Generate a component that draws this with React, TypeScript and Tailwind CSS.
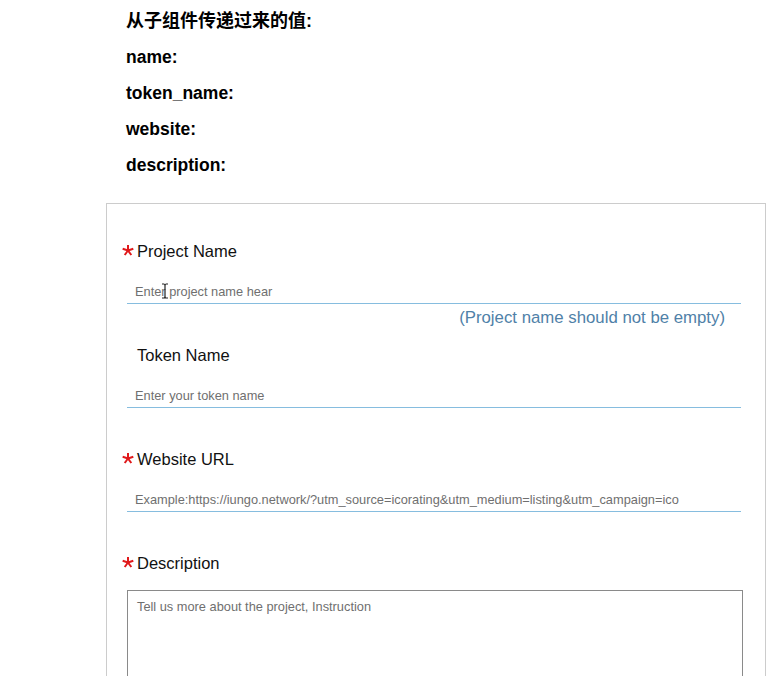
import React from 'react';

const FONT = '"Liberation Sans", Arial, "Noto Sans CJK SC", sans-serif';

function Star() {
  // five-spoked red asterisk used on required labels
  const spokes = [-90, -18, 54, 126, 198];
  return (
    <svg width="12" height="12" viewBox="0 0 12 12" className="mt-[-3px]">
      {spokes.map((a) => {
        const r = (a * Math.PI) / 180;
        return (
          <line
            key={a}
            x1="6"
            y1="6.5"
            x2={6 + Math.cos(r) * 5.6}
            y2={6.5 + Math.sin(r) * 5.6}
            stroke="#e0191b"
            strokeWidth="2"
          />
        );
      })}
    </svg>
  );
}

function Field({
  label,
  required,
  placeholder,
  error,
  cursor,
}: {
  label: string;
  required?: boolean;
  placeholder: string;
  error?: string;
  cursor?: boolean;
}) {
  return (
    <div className="flex flex-col">
      <div className="h-[24px] flex items-center">
        <div className="w-[15px] flex items-center">{required && <Star />}</div>
        <span className="text-[16.5px] text-[#111]">{label}</span>
      </div>
      <div className="relative mt-[16px] ml-[5px] w-[614px] h-[25px]">
        <input
          className="block w-full h-[25px] px-[8px] border-b border-[#86bddf] outline-none text-[12.8px] placeholder:text-[#6f6f6f] bg-transparent"
          placeholder={placeholder}
        />
        {cursor && (
          <svg width="8" height="16" viewBox="0 0 8 16" className="absolute left-[34px] top-[4px]">
            <path d="M1 1 H3 Q4 1 4 3 V13 Q4 15 3 15 H1 M7 1 H5 Q4 1 4 3 M4 13 Q4 15 5 15 H7" fill="none" stroke="#222" strokeWidth="1.2" />
          </svg>
        )}
      </div>
      <div className="h-[20px] mt-[4px] mr-[40px] flex items-center justify-end text-[16.8px] text-[#4f81a8]">
        {error}
      </div>
    </div>
  );
}

export default function App() {
  return (
    <div className="bg-white min-h-screen" style={{ fontFamily: FONT }}>
      <div className="pl-[126px] pt-[3px] text-[17.5px] font-bold text-black">
        <div className="h-[36px] flex items-center text-[18px]">从子组件传递过来的值:</div>
        <div className="h-[36px] flex items-center">name:</div>
        <div className="h-[36px] flex items-center">token_name:</div>
        <div className="h-[36px] flex items-center">website:</div>
        <div className="h-[36px] flex items-center">description:</div>
      </div>

      <div className="mt-[20px] ml-[106px] w-[660px] border border-[#cccccc] pt-[35px] pl-[15px] pb-[20px]">
        <div className="flex flex-col gap-[15px]">
          <Field
            label="Project Name"
            required
            placeholder="Enter project name hear"
            error="(Project name should not be empty)"
            cursor
          />
          <Field label="Token Name" placeholder="Enter your token name" />
          <Field
            label="Website URL"
            required
            placeholder="Example:https://iungo.network/?utm_source=icorating&utm_medium=listing&utm_campaign=ico"
          />
          <div className="flex flex-col">
            <div className="h-[24px] flex items-center">
              <div className="w-[15px] flex items-center">
                <Star />
              </div>
              <span className="text-[16.5px] text-[#111]">Description</span>
            </div>
            <textarea
              className="block mt-[15px] ml-[5px] w-[616px] h-[130px] border border-[#8a8a8a] px-[9px] py-[6px] text-[12.8px] outline-none resize-none placeholder:text-[#6f6f6f]"
              placeholder="Tell us more about the project, Instruction"
            />
          </div>
        </div>
      </div>
    </div>
  );
}
